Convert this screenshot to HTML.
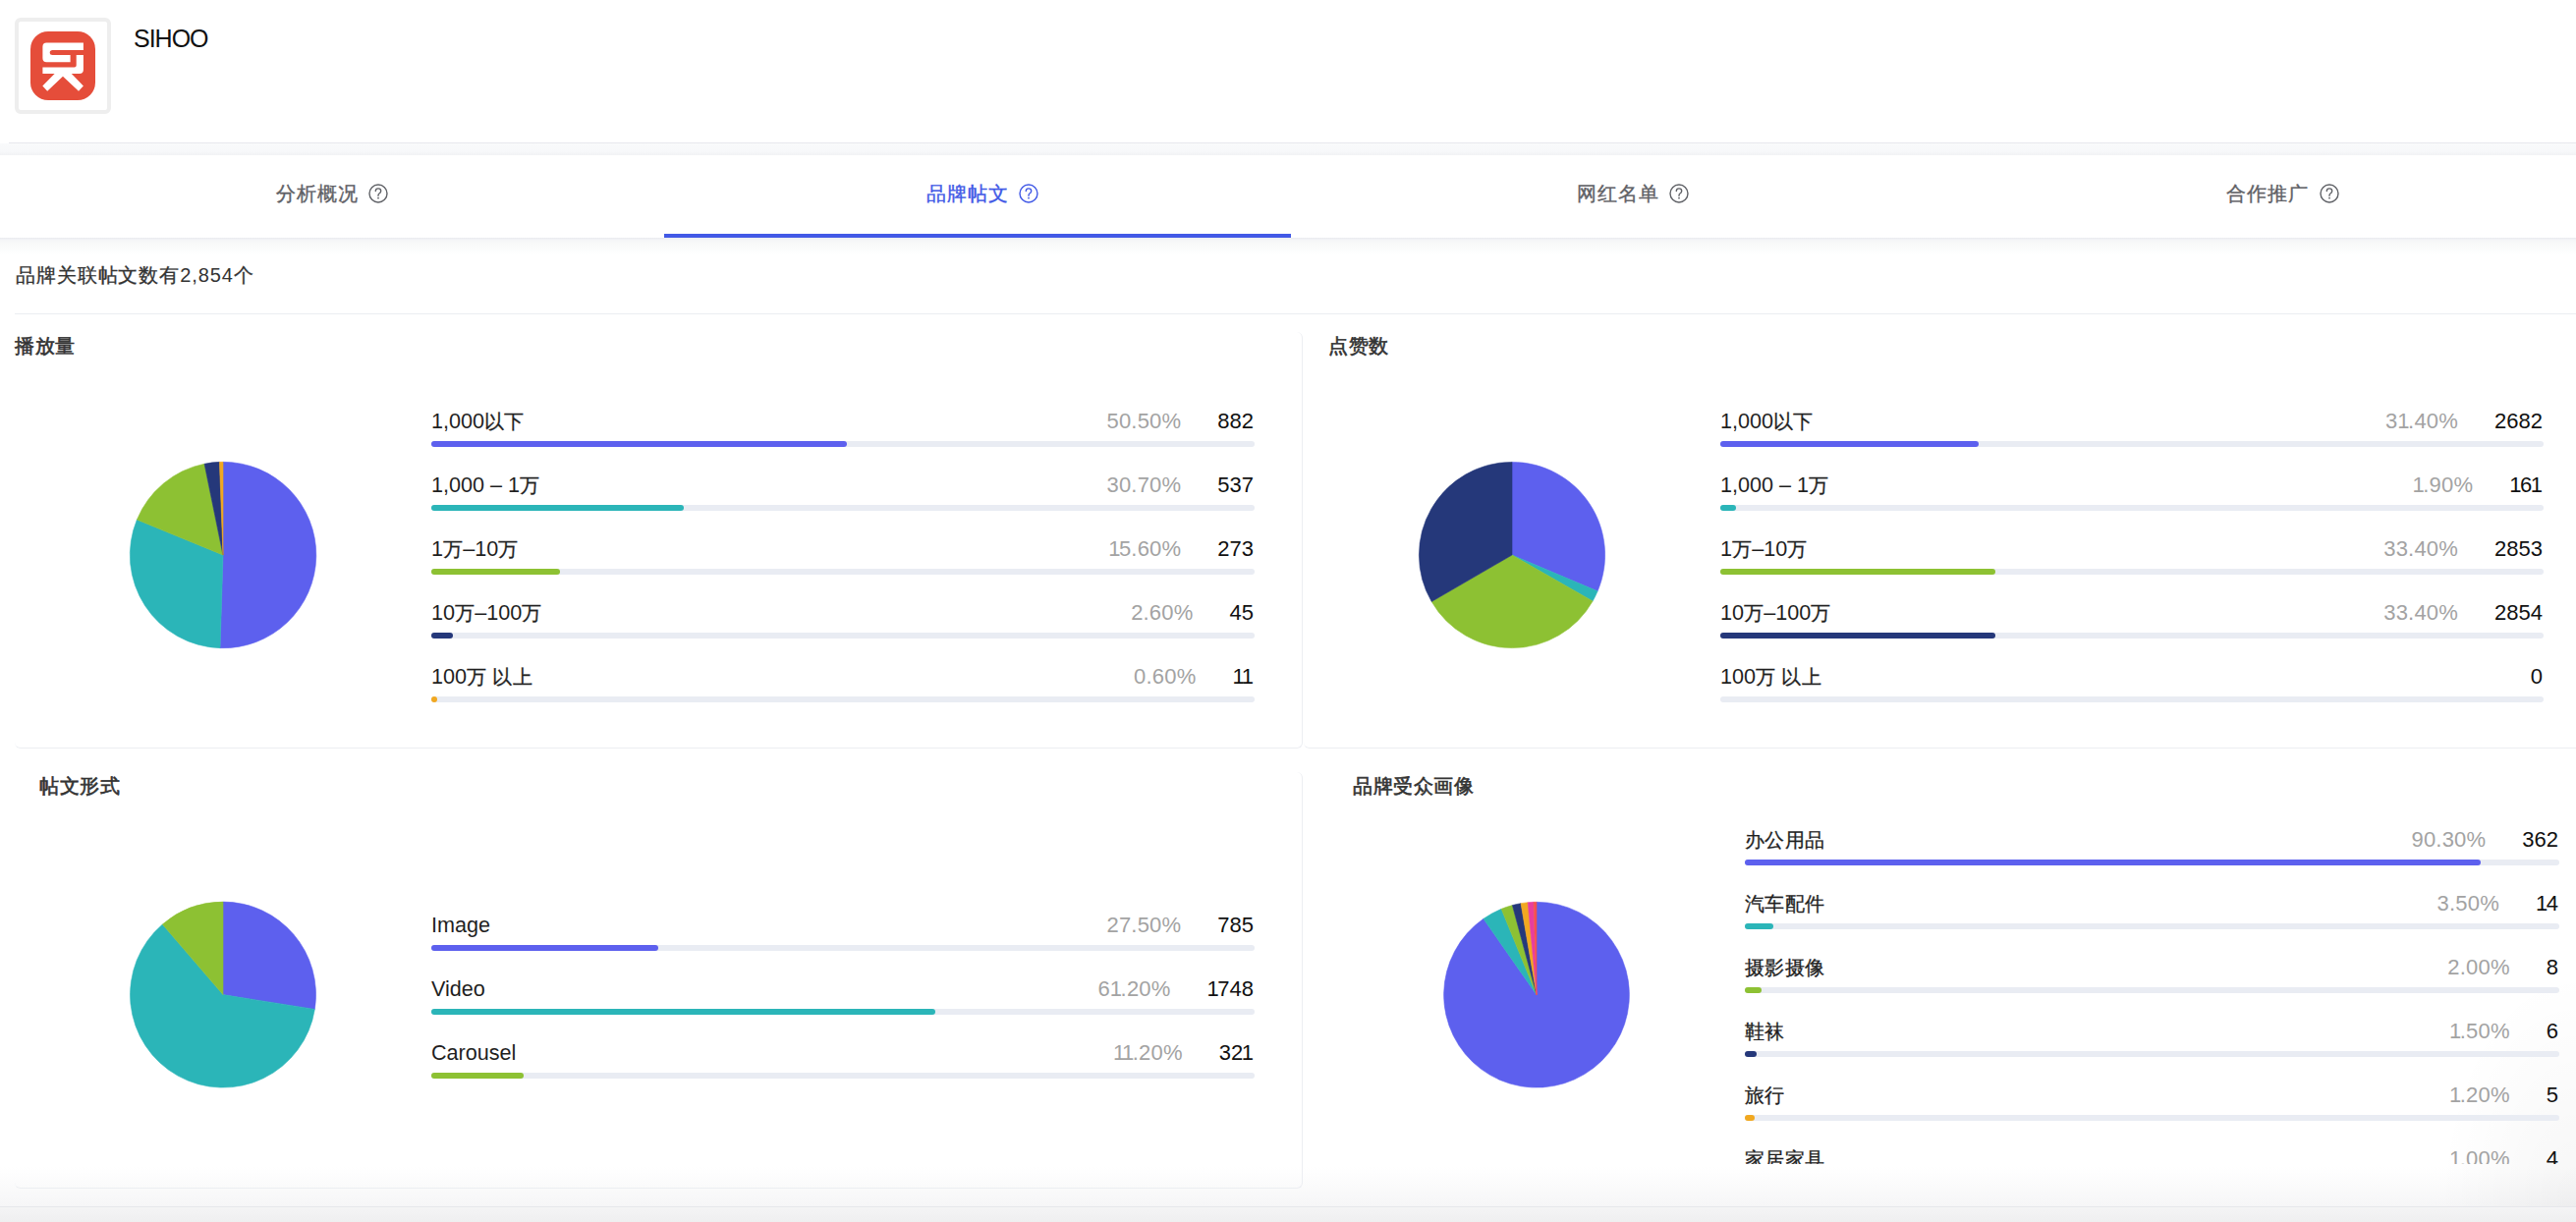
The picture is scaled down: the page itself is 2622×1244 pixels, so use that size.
<!DOCTYPE html><html><head><meta charset="utf-8"><style>
*{margin:0;padding:0;box-sizing:border-box}
html,body{width:2622px;height:1244px;overflow:hidden;background:#fff;font-family:"Liberation Sans",sans-serif}
.abs{position:absolute}
.lbl,.cnt,.ttl,.tab,.txt{position:absolute;white-space:nowrap;line-height:22px;font-size:20px}
.lbl{color:#1f1f1f;font-size:21.6px}
.o{letter-spacing:-1.5px}
.ol{letter-spacing:-1px}
.c{font-size:20px;letter-spacing:0.3px;-webkit-text-stroke:0.3px #1f1f1f}
.cnt{color:#111;font-size:22px;text-align:right}
.pct{color:#a3a3a3;margin-right:37px;letter-spacing:0.2px}
.trk{position:absolute;height:6px;border-radius:3px;background:#e9ecf3}
.bar{position:absolute;height:6px;border-radius:3px}
.ttl{font-weight:normal;color:#333;letter-spacing:0.5px;-webkit-text-stroke:0.6px #333}
.tab{color:#5f6166;letter-spacing:1px;-webkit-text-stroke:0.35px currentColor}
.card{position:absolute;border-radius:6px;border-right:1px solid #eceef2;border-bottom:1px solid #eceef2}
</style></head><body>
<div class="abs" style="left:15px;top:18px;width:98px;height:98px;border:4px solid #eeeeee;border-radius:6px"></div>
<svg class="abs" style="left:31px;top:32px" width="66" height="70" viewBox="0 0 66 70">
<rect x="0" y="0" width="66" height="70" rx="18" ry="18" fill="#e54d3a"/>
<path fill="#fff" d="M16.4,11.6 H53.9 V18.9 H22.5 Q19.7,18.9 19.7,21.5 Q19.7,24 22.5,24 H40.6 V31.3 H16.4 Q12.4,31.3 12.4,27.3 V15.6 Q12.4,11.6 16.4,11.6 Z"/>
<path fill="#fff" d="M46.7,24 H53.9 V39 Q53.9,43.1 49.8,43.1 H12.4 V36.5 H44.7 Q46.7,36.5 46.7,34.5 Z"/>
<path fill="#fff" d="M24.6,43 H41.8 L53.9,55.6 L49,60.8 L33,45.8 L17.2,60.8 L12.3,55.6 Z"/>
</svg>
<div class="txt" style="left:136px;top:24px;font-size:25px;line-height:30px;color:#111;letter-spacing:-1px">SIHOO</div>
<div class="abs" style="left:9px;top:145px;width:2613px;height:1px;background:#e7e8ed"></div>
<div class="abs" style="left:0;top:146px;width:2622px;height:12px;background:linear-gradient(#f9fafb,#f7f8fa 70%,#f1f2f4)"></div>
<div class="abs" style="left:0;top:242px;width:2622px;height:18px;background:linear-gradient(#e9eaee 0px,#f4f5f7 2px,#f8f9f9 6px,rgba(255,255,255,0) 18px)"></div>
<div class="tab" style="left:281px;top:186px;color:#5f6166">分析概况</div>
<svg class="abs" style="left:374.5px;top:186.5px" width="20" height="20" viewBox="0 0 20 20"><circle cx="10" cy="10" r="9" fill="none" stroke="#5f6166" stroke-width="1.4"/><path d="M7.3,7.6 Q7.3,4.9 10,4.9 Q12.7,4.9 12.7,7.4 Q12.7,9 11,10 Q10,10.6 10,12.2" fill="none" stroke="#5f6166" stroke-width="1.4" stroke-linecap="round"/><circle cx="10" cy="14.6" r="0.95" fill="#5f6166"/></svg>
<div class="tab" style="left:943px;top:186px;color:#4058e6">品牌帖文</div>
<svg class="abs" style="left:1036.5px;top:186.5px" width="20" height="20" viewBox="0 0 20 20"><circle cx="10" cy="10" r="9" fill="none" stroke="#4058e6" stroke-width="1.4"/><path d="M7.3,7.6 Q7.3,4.9 10,4.9 Q12.7,4.9 12.7,7.4 Q12.7,9 11,10 Q10,10.6 10,12.2" fill="none" stroke="#4058e6" stroke-width="1.4" stroke-linecap="round"/><circle cx="10" cy="14.6" r="0.95" fill="#4058e6"/></svg>
<div class="tab" style="left:1605px;top:186px;color:#5f6166">网红名单</div>
<svg class="abs" style="left:1698.5px;top:186.5px" width="20" height="20" viewBox="0 0 20 20"><circle cx="10" cy="10" r="9" fill="none" stroke="#5f6166" stroke-width="1.4"/><path d="M7.3,7.6 Q7.3,4.9 10,4.9 Q12.7,4.9 12.7,7.4 Q12.7,9 11,10 Q10,10.6 10,12.2" fill="none" stroke="#5f6166" stroke-width="1.4" stroke-linecap="round"/><circle cx="10" cy="14.6" r="0.95" fill="#5f6166"/></svg>
<div class="tab" style="left:2266px;top:186px;color:#5f6166">合作推广</div>
<svg class="abs" style="left:2360.5px;top:186.5px" width="20" height="20" viewBox="0 0 20 20"><circle cx="10" cy="10" r="9" fill="none" stroke="#5f6166" stroke-width="1.4"/><path d="M7.3,7.6 Q7.3,4.9 10,4.9 Q12.7,4.9 12.7,7.4 Q12.7,9 11,10 Q10,10.6 10,12.2" fill="none" stroke="#5f6166" stroke-width="1.4" stroke-linecap="round"/><circle cx="10" cy="14.6" r="0.95" fill="#5f6166"/></svg>
<div class="abs" style="left:676px;top:238px;width:638px;height:4px;background:#4259e6"></div>
<div class="txt" style="left:16px;top:269px;color:#333;letter-spacing:0.9px"><span style="-webkit-text-stroke:0.3px #333">品牌关联帖文数有</span>2,854<span style="-webkit-text-stroke:0.3px #333">个</span></div>
<div class="abs" style="left:15px;top:319px;width:2607px;height:1px;background:#ebedf2"></div>
<div class="abs" style="left:0;top:1188px;width:2622px;height:40px;background:linear-gradient(rgba(247,247,248,0),rgba(246,246,247,1))"></div>
<div class="abs" style="left:2480px;top:980px;width:142px;height:248px;background:radial-gradient(ellipse 140px 240px at 100% 100%,rgba(0,0,0,0.035),rgba(0,0,0,0))"></div>
<div class="abs" style="left:0;top:1228px;width:2622px;height:1px;background:#e6e7eb"></div>
<div class="abs" style="left:0;top:1229px;width:2622px;height:15px;background:linear-gradient(#f4f4f5,#efeff0)"></div>
<div class="card" style="left:15px;top:338px;width:1311px;height:424px"></div>
<div class="card" style="left:1327px;top:338px;width:1400px;height:424px"></div>
<div class="card" style="left:15px;top:786px;width:1311px;height:424px"></div>
<div class="ttl" style="left:15px;top:341px">播放量</div>
<div class="ttl" style="left:1352px;top:341px">点赞数</div>
<div class="ttl" style="left:40px;top:789px">帖文形式</div>
<div class="ttl" style="left:1377px;top:789px">品牌受众画像</div>
<svg class="abs" style="left:0;top:0" width="2622" height="1244" viewBox="0 0 2622 1244"><path d="M227,565 L227.00,470.30 A94.7,94.7 0 1 1 224.03,659.65 Z" fill="#5d60ee" stroke="#5d60ee" stroke-width="0.6" stroke-linejoin="round"/><path d="M227,565 L224.03,659.65 A94.7,94.7 0 0 1 139.40,529.03 Z" fill="#2bb5b8" stroke="#2bb5b8" stroke-width="0.6" stroke-linejoin="round"/><path d="M227,565 L139.40,529.03 A94.7,94.7 0 0 1 208.09,472.21 Z" fill="#8dc133" stroke="#8dc133" stroke-width="0.6" stroke-linejoin="round"/><path d="M227,565 L208.09,472.21 A94.7,94.7 0 0 1 223.43,470.37 Z" fill="#25387a" stroke="#25387a" stroke-width="0.6" stroke-linejoin="round"/><path d="M227,565 L223.43,470.37 A94.7,94.7 0 0 1 227.00,470.30 Z" fill="#f1a820" stroke="#f1a820" stroke-width="0.6" stroke-linejoin="round"/></svg>
<svg class="abs" style="left:0;top:0" width="2622" height="1244" viewBox="0 0 2622 1244"><path d="M1539,565 L1539.00,470.40 A94.6,94.6 0 0 1 1626.13,601.85 Z" fill="#5d60ee" stroke="#5d60ee" stroke-width="0.6" stroke-linejoin="round"/><path d="M1539,565 L1626.13,601.85 A94.6,94.6 0 0 1 1621.12,611.96 Z" fill="#2bb5b8" stroke="#2bb5b8" stroke-width="0.6" stroke-linejoin="round"/><path d="M1539,565 L1621.12,611.96 A94.6,94.6 0 0 1 1457.17,612.47 Z" fill="#8dc133" stroke="#8dc133" stroke-width="0.6" stroke-linejoin="round"/><path d="M1539,565 L1457.17,612.47 A94.6,94.6 0 0 1 1539.00,470.40 Z" fill="#25387a" stroke="#25387a" stroke-width="0.6" stroke-linejoin="round"/></svg>
<svg class="abs" style="left:0;top:0" width="2622" height="1244" viewBox="0 0 2622 1244"><path d="M227,1012.6 L227.00,918.10 A94.5,94.5 0 0 1 320.34,1027.38 Z" fill="#5d60ee" stroke="#5d60ee" stroke-width="0.6" stroke-linejoin="round"/><path d="M227,1012.6 L320.34,1027.38 A94.5,94.5 0 1 1 165.40,940.93 Z" fill="#2bb5b8" stroke="#2bb5b8" stroke-width="0.6" stroke-linejoin="round"/><path d="M227,1012.6 L165.40,940.93 A94.5,94.5 0 0 1 227.00,918.10 Z" fill="#8dc133" stroke="#8dc133" stroke-width="0.6" stroke-linejoin="round"/></svg>
<svg class="abs" style="left:0;top:0" width="2622" height="1244" viewBox="0 0 2622 1244"><path d="M1564,1012.7 L1564.00,918.30 A94.4,94.4 0 1 1 1509.96,935.30 Z" fill="#5d60ee" stroke="#5d60ee" stroke-width="0.6" stroke-linejoin="round"/><path d="M1564,1012.7 L1509.96,935.30 A94.4,94.4 0 0 1 1528.15,925.37 Z" fill="#2bb5b8" stroke="#2bb5b8" stroke-width="0.6" stroke-linejoin="round"/><path d="M1564,1012.7 L1528.15,925.37 A94.4,94.4 0 0 1 1539.38,921.57 Z" fill="#8dc133" stroke="#8dc133" stroke-width="0.6" stroke-linejoin="round"/><path d="M1564,1012.7 L1539.38,921.57 A94.4,94.4 0 0 1 1548.06,919.66 Z" fill="#25387a" stroke="#25387a" stroke-width="0.6" stroke-linejoin="round"/><path d="M1564,1012.7 L1548.06,919.66 A94.4,94.4 0 0 1 1555.12,918.72 Z" fill="#f1a820" stroke="#f1a820" stroke-width="0.6" stroke-linejoin="round"/><path d="M1564,1012.7 L1555.12,918.72 A94.4,94.4 0 0 1 1561.03,918.35 Z" fill="#e83e9e" stroke="#e83e9e" stroke-width="0.6" stroke-linejoin="round"/><path d="M1564,1012.7 L1561.03,918.35 A94.4,94.4 0 0 1 1564.00,918.30 Z" fill="#f25050" stroke="#f25050" stroke-width="0.6" stroke-linejoin="round"/></svg>
<div class="lbl" style="left:439px;top:418px">1,000<span class="c">以下</span></div><div class="cnt" style="right:1346px;top:418px"><span class="pct">50.50%</span><span class="num">882</span></div><div class="trk" style="left:439px;top:449px;width:838px"></div><div class="bar" style="left:439px;top:449px;width:423.2px;background:#5d60ee"></div><div class="lbl" style="left:439px;top:483px">1,000 – 1<span class="c">万</span></div><div class="cnt" style="right:1346px;top:483px"><span class="pct">30.70%</span><span class="num">537</span></div><div class="trk" style="left:439px;top:514px;width:838px"></div><div class="bar" style="left:439px;top:514px;width:257.3px;background:#2bb5b8"></div><div class="lbl" style="left:439px;top:548px">1<span class="c">万</span>–10<span class="c">万</span></div><div class="cnt" style="right:1346px;top:548px"><span class="pct"><span class="o">1</span>5.60%</span><span class="num">273</span></div><div class="trk" style="left:439px;top:579px;width:838px"></div><div class="bar" style="left:439px;top:579px;width:130.7px;background:#8dc133"></div><div class="lbl" style="left:439px;top:613px">10<span class="c">万</span>–100<span class="c">万</span></div><div class="cnt" style="right:1346px;top:613px"><span class="pct">2.60%</span><span class="num">45</span></div><div class="trk" style="left:439px;top:644px;width:838px"></div><div class="bar" style="left:439px;top:644px;width:21.8px;background:#25387a"></div><div class="lbl" style="left:439px;top:678px">100<span class="c">万</span> <span class="c">以上</span></div><div class="cnt" style="right:1346px;top:678px"><span class="pct">0.60%</span><span class="num"><span class="o">1</span><span style="margin-left:-1.5px">1</span></span></div><div class="trk" style="left:439px;top:709px;width:838px"></div><div class="bar" style="left:439px;top:709px;width:6.0px;background:#f1a820"></div>
<div class="lbl" style="left:1751px;top:418px">1,000<span class="c">以下</span></div><div class="cnt" style="right:34px;top:418px"><span class="pct">3<span class="o">1</span>.40%</span><span class="num">2682</span></div><div class="trk" style="left:1751px;top:449px;width:838px"></div><div class="bar" style="left:1751px;top:449px;width:263.1px;background:#5d60ee"></div><div class="lbl" style="left:1751px;top:483px">1,000 – 1<span class="c">万</span></div><div class="cnt" style="right:34px;top:483px"><span class="pct"><span class="o">1</span>.90%</span><span class="num"><span class="o">1</span>6<span style="margin-left:-1.5px">1</span></span></div><div class="trk" style="left:1751px;top:514px;width:838px"></div><div class="bar" style="left:1751px;top:514px;width:15.9px;background:#2bb5b8"></div><div class="lbl" style="left:1751px;top:548px">1<span class="c">万</span>–10<span class="c">万</span></div><div class="cnt" style="right:34px;top:548px"><span class="pct">33.40%</span><span class="num">2853</span></div><div class="trk" style="left:1751px;top:579px;width:838px"></div><div class="bar" style="left:1751px;top:579px;width:279.9px;background:#8dc133"></div><div class="lbl" style="left:1751px;top:613px">10<span class="c">万</span>–100<span class="c">万</span></div><div class="cnt" style="right:34px;top:613px"><span class="pct">33.40%</span><span class="num">2854</span></div><div class="trk" style="left:1751px;top:644px;width:838px"></div><div class="bar" style="left:1751px;top:644px;width:279.9px;background:#25387a"></div><div class="lbl" style="left:1751px;top:678px">100<span class="c">万</span> <span class="c">以上</span></div><div class="cnt" style="right:34px;top:678px"><span class="pct"></span><span class="num">0</span></div><div class="trk" style="left:1751px;top:709px;width:838px"></div>
<div class="lbl" style="left:439px;top:931px">Image</div><div class="cnt" style="right:1346px;top:931px"><span class="pct">27.50%</span><span class="num">785</span></div><div class="trk" style="left:439px;top:962px;width:838px"></div><div class="bar" style="left:439px;top:962px;width:230.5px;background:#5d60ee"></div><div class="lbl" style="left:439px;top:996px">Video</div><div class="cnt" style="right:1346px;top:996px"><span class="pct">6<span class="o">1</span>.20%</span><span class="num"><span class="o">1</span>748</span></div><div class="trk" style="left:439px;top:1027px;width:838px"></div><div class="bar" style="left:439px;top:1027px;width:512.9px;background:#2bb5b8"></div><div class="lbl" style="left:439px;top:1061px">Carousel</div><div class="cnt" style="right:1346px;top:1061px"><span class="pct"><span class="o">1</span><span class="o">1</span>.20%</span><span class="num">32<span style="margin-left:-1.5px">1</span></span></div><div class="trk" style="left:439px;top:1092px;width:838px"></div><div class="bar" style="left:439px;top:1092px;width:93.9px;background:#8dc133"></div>
<div class="abs" style="left:0;top:0;width:2622px;height:1185px;overflow:hidden">
<div class="lbl" style="left:1776px;top:844px"><span class="c">办公用品</span></div><div class="cnt" style="right:18px;top:844px"><span class="pct">90.30%</span><span class="num">362</span></div><div class="trk" style="left:1776px;top:875px;width:829px"></div><div class="bar" style="left:1776px;top:875px;width:748.6px;background:#5d60ee"></div><div class="lbl" style="left:1776px;top:909px"><span class="c">汽车配件</span></div><div class="cnt" style="right:18px;top:909px"><span class="pct">3.50%</span><span class="num"><span class="o">1</span>4</span></div><div class="trk" style="left:1776px;top:940px;width:829px"></div><div class="bar" style="left:1776px;top:940px;width:29.0px;background:#2bb5b8"></div><div class="lbl" style="left:1776px;top:974px"><span class="c">摄影摄像</span></div><div class="cnt" style="right:18px;top:974px"><span class="pct">2.00%</span><span class="num">8</span></div><div class="trk" style="left:1776px;top:1005px;width:829px"></div><div class="bar" style="left:1776px;top:1005px;width:16.6px;background:#8dc133"></div><div class="lbl" style="left:1776px;top:1039px"><span class="c">鞋袜</span></div><div class="cnt" style="right:18px;top:1039px"><span class="pct"><span class="o">1</span>.50%</span><span class="num">6</span></div><div class="trk" style="left:1776px;top:1070px;width:829px"></div><div class="bar" style="left:1776px;top:1070px;width:12.4px;background:#25387a"></div><div class="lbl" style="left:1776px;top:1104px"><span class="c">旅行</span></div><div class="cnt" style="right:18px;top:1104px"><span class="pct"><span class="o">1</span>.20%</span><span class="num">5</span></div><div class="trk" style="left:1776px;top:1135px;width:829px"></div><div class="bar" style="left:1776px;top:1135px;width:9.9px;background:#f1a820"></div><div class="lbl" style="left:1776px;top:1169px"><span class="c">家居家具</span></div><div class="cnt" style="right:18px;top:1169px"><span class="pct"><span class="o">1</span>.00%</span><span class="num">4</span></div><div class="trk" style="left:1776px;top:1200px;width:829px"></div><div class="bar" style="left:1776px;top:1200px;width:8.3px;background:#e83e9e"></div>
</div>
</body></html>
